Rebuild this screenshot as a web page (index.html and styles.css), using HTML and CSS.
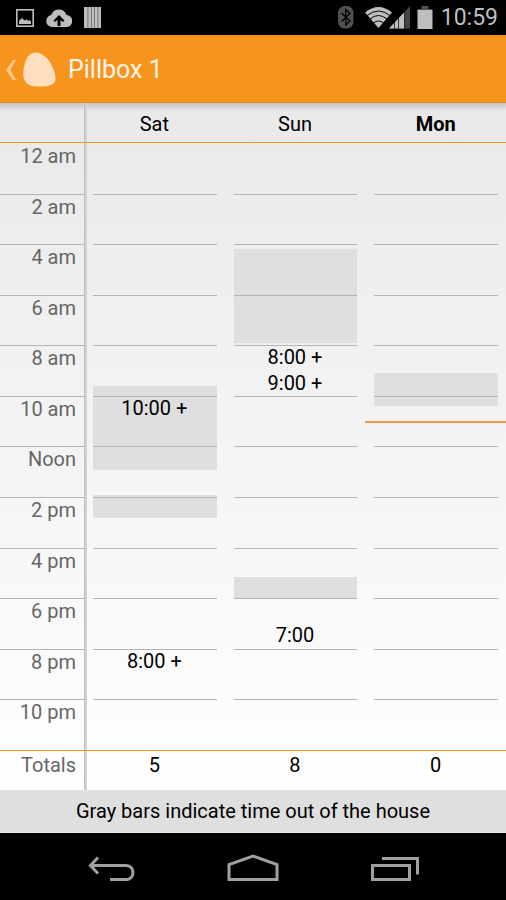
FILE: index.html
```html
<!DOCTYPE html>
<html lang="en">
<head>
<meta charset="utf-8">
<meta name="viewport" content="width=device-width, initial-scale=1">
<title>Pillbox 1</title>
<link rel="stylesheet" href="styles.css">
</head>
<body>
<div class="status">
  <div class="status-group notices">
    <svg width="18" height="18" viewBox="0 0 18 18" aria-hidden="true"><rect x=".8" y=".8" width="16.4" height="16.4" fill="none" stroke="#bebebe" stroke-width="1.6"/><path d="M3 15v-3l3-3 2.500 2.500 2-1 2 1.500 1-1 1.500 1.500V15z" fill="#bebebe"/></svg>
    <svg width="26" height="18" viewBox="0 0 26 18" aria-hidden="true"><path d="M6 18a6 6 0 0 1-.8-11.900A8 8 0 0 1 20.500 6 6 6 0 0 1 20 18z" fill="#bebebe"/><path d="M13 6l5.500 5.500-1.500 1.500-2.500-2V17h-3v-6L9 13l-1.500-1.500z" fill="#000"/></svg>
    <svg width="17" height="21" viewBox="0 0 17 21" aria-hidden="true"><path d="M0 0h17v21H0z" fill="#bebebe"/><path d="M3.500 0h.8v21h-.8zM7 0h.8v21H7zM10 0h.8v21H10zM13.500 0h.8v21h-.8z" fill="#666"/></svg>
  </div>
  <div class="status-group">
    <svg width="16" height="23" viewBox="0 0 16 23" aria-hidden="true"><rect width="15.500" height="22.500" rx="6.500" fill="#505050"/><path d="M3.500 7l8.500 8-4.200 4V3.500L12 7.500l-8.500 8" fill="none" stroke="#000" stroke-width="1.300"/></svg>
    <svg class="wifi" width="45" height="23" viewBox="0 0 45 23" aria-hidden="true"><path d="M0 6.500Q13.500-4.500 27 6.500L13.500 22z" fill="#bebebe"/><path d="M2.200 9.500q11.300-9 22.600 0M5 13q8.500-7 17 0M8.500 17q5-4 10 0" fill="none" stroke="#000" stroke-width="1"/><path d="M24 22.500L45 0v22.500z" fill="#444"/><path d="M24 22.500L39.500 6v16.500z" fill="#bebebe"/><path d="M29.500 16v7M33.500 11v12M39.500 4v19" stroke="#111" stroke-width=".8"/></svg>
    <svg width="16" height="23" viewBox="0 0 16 23" aria-hidden="true"><path d="M4.500 0h7v3H15v3H.5V3h4z" fill="#505050"/><path d="M.5 4h15v19H.5z" fill="#bebebe"/></svg>
    <time class="clock">10:59</time>
  </div>
</div>

<header class="appbar">
  <a class="up" href="#" aria-label="Back">
    <svg width="10" height="20" viewBox="0 0 10 20" aria-hidden="true"><path d="M7 0h3L4.500 10 10 20H7L0 10z" fill="#fcc88a"/></svg>
    <svg width="33" height="35" viewBox="0 0 33 35" aria-hidden="true"><path d="M12.500.5C18 .5 25 5 29 14c3 7 5 13 2 17-2.500 3-9 3.500-15 3.500-7 0-11-1-14-5.500C-1 24 .5 17 2 11 4 4 7.500.5 12.500.5z" fill="#fddfbf"/></svg>
  </a>
  <h1 class="title">Pillbox 1</h1>
</header>

<main class="main">
  <table class="week">
    <thead>
      <tr><td></td><th scope="col">Sat</th><th scope="col">Sun</th><th scope="col" class="today">Mon</th></tr>
    </thead>
    <tbody>
      <tr><th scope="row">12 am</th><td></td><td></td><td></td></tr>
      <tr><th scope="row">2 am</th><td></td><td></td><td></td></tr>
      <tr><th scope="row">4 am</th><td></td><td><div class="away" style="top:9%;height:187%"></div></td><td></td></tr>
      <tr><th scope="row">6 am</th><td></td><td></td><td></td></tr>
      <tr><th scope="row">8 am</th><td><div class="away" style="top:81%;height:165%"></div></td><td><span class="dose">8:00 +</span><span class="dose">9:00 +</span></td><td><div class="away" style="top:54%;height:66%"></div></td></tr>
      <tr><th scope="row">10 am</th><td><span class="dose">10:00 +</span></td><td></td><td><div class="now" style="top:49%"></div></td></tr>
      <tr><th scope="row">Noon</th><td><div class="away" style="top:95%;height:46%"></div></td><td></td><td></td></tr>
      <tr><th scope="row">2 pm</th><td></td><td></td><td></td></tr>
      <tr><th scope="row">4 pm</th><td></td><td><div class="away" style="top:59%;height:41%"></div></td><td></td></tr>
      <tr><th scope="row">6 pm</th><td></td><td><span class="dose"></span><span class="dose">7:00</span></td><td></td></tr>
      <tr><th scope="row">8 pm</th><td><span class="dose">8:00 +</span></td><td></td><td></td></tr>
      <tr><th scope="row">10 pm</th><td></td><td></td><td></td></tr>
    </tbody>
    <tfoot>
      <tr><th scope="row">Totals</th><td>5</td><td>8</td><td>0</td></tr>
    </tfoot>
  </table>
  <p class="legend">Gray bars indicate time out of the house</p>
</main>

<nav class="navbar">
  <button type="button" aria-label="Back"><svg width="48" height="28" viewBox="0 0 48 28" aria-hidden="true"><path d="M3 11.500h36.500a6.500 7 0 0 1 0 14H23" fill="none" stroke="#a0a0a0" stroke-width="3"/><path d="M11 3.500L3.500 11.500l7.500 8" fill="none" stroke="#a0a0a0" stroke-width="3"/></svg></button>
  <button type="button" aria-label="Home"><svg width="52" height="28" viewBox="0 0 52 28" aria-hidden="true"><path d="M2 25.500V10.500L26 2l24 8.500v15z" fill="none" stroke="#a0a0a0" stroke-width="3"/></svg></button>
  <button type="button" aria-label="Recent apps"><svg width="48" height="28" viewBox="0 0 48 28" aria-hidden="true"><path d="M1.500 11.500h37v14h-37z" fill="none" stroke="#a0a0a0" stroke-width="3"/><path d="M11 4.500h35.500v16" fill="none" stroke="#a0a0a0" stroke-width="3"/></svg></button>
</nav>
</body>
</html>
```
FILE: styles.css
```css
* {
  box-sizing: border-box;
}

body {
  margin: 0;
  min-height: 100vh;
  display: flex;
  flex-direction: column;
  background: #000;
  color: #000;
  font: 20px/25px Roboto, "Liberation Sans", sans-serif;
}

.status {
  display: flex;
  justify-content: space-between;
  height: 35px;
  padding: 0 8px 0 16px;
}

.status-group {
  display: flex;
  align-items: center;
  gap: 7px;
}

.notices {
  gap: 12px;
}

.wifi {
  margin-left: 4px;
}

.clock {
  color: #bebebe;
  font-size: 23px;
  margin-left: 1px;
}

.appbar {
  display: flex;
  align-items: center;
  gap: 12px;
  height: 68px;
  padding: 2px 6px 0;
  background: #f7941e;
  border-bottom: 1px solid #e38a22;
}

.up {
  display: flex;
  align-items: center;
  gap: 7px;
}

.title {
  margin: 0;
  color: #fff4e8;
  font-size: 25px;
  font-weight: 400;
}

.main {
  flex: 1;
  display: flex;
  flex-direction: column;
  background: linear-gradient(rgba(0, 0, 0, .16), transparent) top / 100% 8px no-repeat, linear-gradient(#e9e9e9, #fff 95%);
}

.week {
  flex: 1;
  display: flex;
  flex-direction: column;
}

tbody {
  flex: 1;
  display: flex;
  flex-direction: column;
  border: solid #f7941e;
  border-width: 1px 0;
}

tr {
  display: grid;
  grid-template-columns: 84px repeat(3, 1fr);
}

tbody tr {
  flex: 1 1 0px;
  min-height: 50px;
}

th,
td {
  display: block;
  position: relative;
  padding: 0;
  font-weight: 400;
  text-align: center;
}

tr > :first-child {
  padding-right: 8px;
  color: #666;
  text-align: right;
}

tbody tr > :first-child {
  padding-top: 1px;
}

/* Divider between the hour labels and the days */
tr > :first-child::before {
  content: "";
  position: absolute;
  top: 0;
  bottom: 0;
  left: 100%;
  width: 3px;
  background: linear-gradient(90deg, #bfbfbf 50%, #d2d2d2 50%);
}

tbody tr > ::after {
  content: "";
  position: absolute;
  right: 8px;
  bottom: -1px;
  left: 9px;
  z-index: 1;
  height: 1px;
  background: #b4b4b4;
}

tbody th::after {
  right: 0;
  left: 0;
}

tbody tr:last-child > ::after {
  display: none;
}

thead th,
thead td {
  height: 39px;
  padding-top: 9px;
}

thead .today {
  font-weight: 700;
}

tfoot th,
tfoot td {
  height: 39px;
  padding-top: 2px;
}

.away {
  position: absolute;
  right: 8px;
  left: 9px;
  background: #dfdfdf;
}

.dose {
  display: block;
  position: relative;
  z-index: 2;
  height: 50%;
}

.now {
  position: absolute;
  right: 0;
  left: 0;
  height: 2px;
  background: #f79a40;
}

.legend {
  margin: 0;
  padding: 9px 8px 8px;
  background: #dfdfdf;
  border-bottom: 1px solid #eee;
  text-align: center;
}

.navbar {
  display: flex;
  justify-content: center;
  height: 67px;
}

.navbar button {
  display: flex;
  align-items: center;
  justify-content: center;
  width: 28%;
  padding: 2px 0 0;
  border: 0;
  background: none;
}
```
